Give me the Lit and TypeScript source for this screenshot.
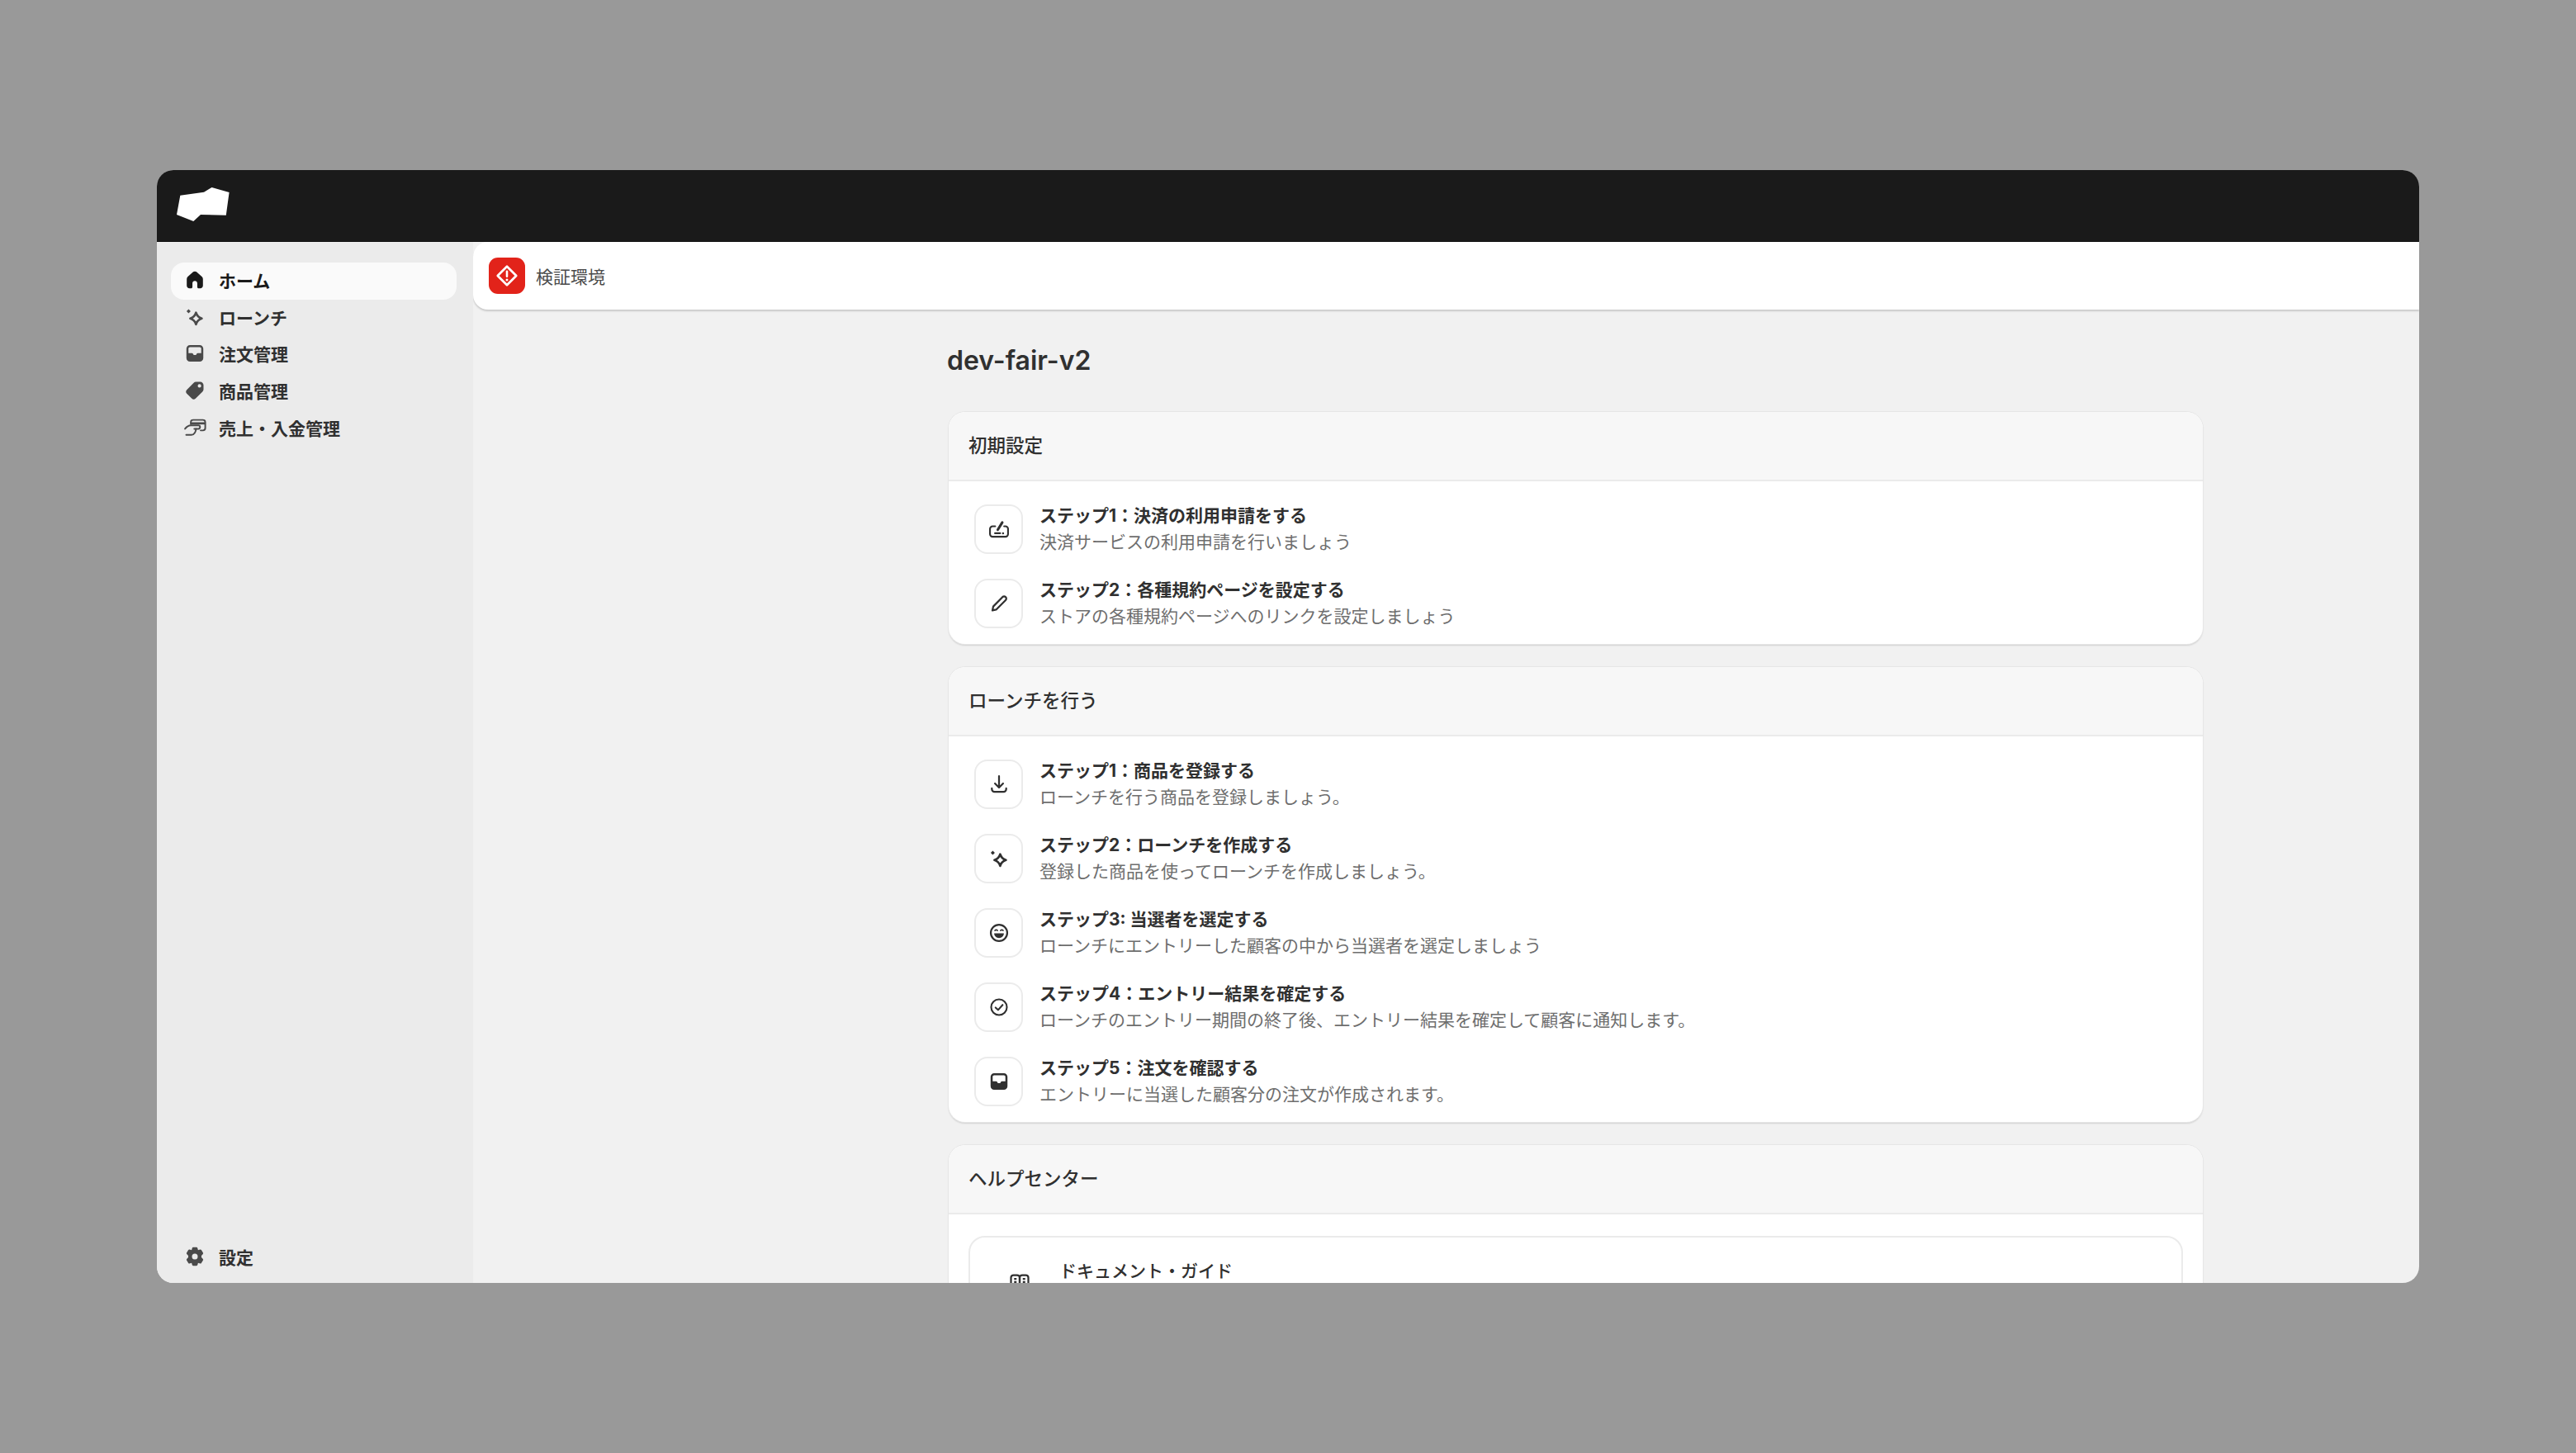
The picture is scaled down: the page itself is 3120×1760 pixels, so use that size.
import { LitElement, html, css, svg } from "lit";
import { customElement } from "lit/decorators.js";

const home = svg`<path fill="currentColor" d="M10 2.600c-.5 0-1 .2-1.400.5L3.800 7.400C3.300 7.900 3 8.500 3 9.200V15c0 1.300 1 2.400 2.300 2.400h1.200c.8 0 1.400-.6 1.400-1.400v-3.200c0-1 .9-1.900 2.100-1.900s2.100.9 2.100 1.900V16c0 .8.600 1.400 1.400 1.400h1.200c1.300 0 2.300-1.100 2.300-2.400V9.200c0-.7-.3-1.300-.8-1.800l-4.800-4.300c-.4-.3-.9-.5-1.400-.5z"/>`;
const sparkle = svg`<path fill="currentColor" d="M4.600 3.200 6.400 5 4.600 6.800 2.800 5z"/><path fill="none" stroke="currentColor" stroke-width="1.900" stroke-linejoin="round" d="M11 6.200C11.800 9 13.200 10.500 16 11.300 13.200 12.100 11.800 13.600 11 16.400 10.200 13.600 8.800 12.100 6 11.300 8.800 10.500 10.200 9 11 6.200z"/>`;
const inboxFilled = svg`<path fill="currentColor" fill-rule="evenodd" d="M5.800 2.800h8.400c1.700 0 3.100 1.400 3.100 3.100v8.200c0 1.700-1.400 3.100-3.100 3.100H5.800c-1.700 0-3.100-1.400-3.100-3.100V5.900c0-1.700 1.400-3.100 3.100-3.100zM4.500 9.800V5.900c0-.7.600-1.300 1.300-1.300h8.400c.7 0 1.300.6 1.300 1.300v3.900h-2.900c-.5 0-.9.300-1.100.7l-.5.9H9l-.5-.9c-.2-.4-.6-.7-1.100-.7z"/>`;
const tag = svg`<path fill="currentColor" fill-rule="evenodd" d="M11 2.500h3.700c1.500 0 2.800 1.300 2.800 2.800V9c0 .8-.3 1.500-.9 2l-6 6c-.9.900-2.300.9-3.200 0l-4.400-4.400c-.9-.9-.9-2.300 0-3.200l6-6c.5-.6 1.200-.9 2-.9zM14 7.500a1.500 1.500 0 1 0 0-3 1.500 1.500 0 0 0 0 3z"/>`;
const finance = svg`<g fill="none" stroke="currentColor" stroke-width="1.400" stroke-linecap="round" stroke-linejoin="round"><path d="M6.500 7V5.300c0-1.100.9-2 2-2H17c1.100 0 2 .9 2 2v5.100c0 1.100-.9 2-2 2h-2"/><path stroke-width="1.900" stroke-linecap="butt" d="M6.500 6.300H19"/><path d="M1.500 11C3 9 4.500 8 6.500 8H13c.9 0 1.500.7 1.500 1.500S13.900 11 13 11H9.500"/><path d="M11 11c0 2-1.500 5.300-4 5.300H2.500"/></g>`;
const gear = svg`<path fill="currentColor" fill-rule="evenodd" d="M8.500 2h3c.4 0 .7.300.8.600l.5 1.800 1.800-.5c.4-.1.800.1 1 .4l1.500 2.500c.2.300.1.700-.1 1L15.700 9.200v1.600l1.300 1.400c.2.300.3.700.1 1l-1.500 2.500c-.2.300-.6.500-1 .4l-1.800-.5-.5 1.800c-.1.300-.4.600-.8.600h-3c-.4 0-.7-.3-.8-.6l-.5-1.800-1.800.5c-.4.100-.8-.1-1-.4L2.900 13.200c-.2-.3-.1-.7.100-1l1.300-1.400V9.200L3 7.800c-.2-.3-.3-.7-.1-1l1.500-2.500c.2-.3.600-.5 1-.4l1.800.5.500-1.800c.1-.3.400-.6.800-.6zM10 12.500a2.500 2.500 0 1 0 0-5 2.500 2.500 0 0 0 0 5z"/>`;
const payment = svg`<g fill="none" stroke="currentColor" stroke-linecap="round" stroke-linejoin="round"><path stroke-width="1.500" d="M6.700 7.500H4.400c-1.200 0-2.200 1-2.200 2.200v4.600c0 1.200 1 2.200 2.200 2.200h11.200c1.200 0 2.200-1 2.200-2.200V9.700c0-1.200-1-2.200-2.200-2.200h-1.200"/><path stroke-width="2.200" d="M8.900 10.500 12.800 4.200"/><path stroke-width="1.500" d="M6.500 13.500h4.500"/></g><circle cx="13.500" cy="13.500" r=".9" fill="currentColor"/>`;
const pencil = svg`<path fill="none" stroke="currentColor" stroke-width="1.600" stroke-linejoin="round" d="M13 4.400c.8-.8 2-.8 2.700 0 .8.700.8 1.900 0 2.700L7.500 15.300 4.300 16 5 12.600z"/>`;
const download = svg`<path fill="none" stroke="currentColor" stroke-width="1.600" stroke-linecap="round" stroke-linejoin="round" d="M10 3v9.500M6.500 9.300 10 12.800l3.500-3.500M3.800 13.500v.7c0 1.200 1 2.300 2.300 2.300h7.800c1.300 0 2.300-1.100 2.300-2.300v-.7"/>`;
const smile = svg`<circle cx="10" cy="10" r="7.100" fill="none" stroke="currentColor" stroke-width="1.600"/><path fill="currentColor" d="M5.800 10.400h8.400c0 2.500-1.900 4-4.200 4s-4.200-1.500-4.200-4z"/><path fill="none" stroke="currentColor" stroke-width="1.200" stroke-linecap="round" d="M6.500 8c.4-.9 1.700-.9 2.100 0M11.400 8c.4-.9 1.700-.9 2.100 0"/>`;
const check = svg`<circle cx="10" cy="10" r="6.800" fill="none" stroke="currentColor" stroke-width="1.500"/><path fill="none" stroke="currentColor" stroke-width="1.500" stroke-linecap="round" stroke-linejoin="round" d="M7 10.300 9.200 12.400 13.100 8"/>`;
const book = svg`<g fill="none" stroke="currentColor" stroke-width="1.500"><path d="M3 5C3 3.900 3.900 3 5 3h3c1.100 0 2 .9 2 2v11H5c-1.100 0-2-.9-2-2z"/><path d="M17 5c0-1.100-.9-2-2-2h-3c-1.100 0-2 .9-2 2v11h5c1.100 0 2-.9 2-2z"/><path d="M5.500 6h2M5.500 8.500h2M12.500 6h2M12.500 8.500h2"/></g>`;

const icon = (p: unknown) => html`<svg viewBox="0 0 20 20" aria-hidden="true">${p}</svg>`;

const nav = [
  { t: "ホーム", i: home, active: true },
  { t: "ローンチ", i: sparkle },
  { t: "注文管理", i: inboxFilled },
  { t: "商品管理", i: tag },
  { t: "売上・入金管理", i: finance },
];

const sections = [
  {
    title: "初期設定",
    steps: [
      { i: payment, t: "ステップ1：決済の利用申請をする", s: "決済サービスの利用申請を行いましょう" },
      { i: pencil, t: "ステップ2：各種規約ページを設定する", s: "ストアの各種規約ページへのリンクを設定しましょう" },
    ],
  },
  {
    title: "ローンチを行う",
    steps: [
      { i: download, t: "ステップ1：商品を登録する", s: "ローンチを行う商品を登録しましょう。" },
      { i: sparkle, t: "ステップ2：ローンチを作成する", s: "登録した商品を使ってローンチを作成しましょう。" },
      { i: smile, t: "ステップ3: 当選者を選定する", s: "ローンチにエントリーした顧客の中から当選者を選定しましょう" },
      { i: check, t: "ステップ4：エントリー結果を確定する", s: "ローンチのエントリー期間の終了後、エントリー結果を確定して顧客に通知します。" },
      { i: inboxFilled, t: "ステップ5：注文を確認する", s: "エントリーに当選した顧客分の注文が作成されます。" },
    ],
  },
];

@customElement("app-root")
export class AppRoot extends LitElement {
  static styles = css`
    :host {
      display: block;
      height: 1760px;
      background: #999999;
      box-sizing: border-box;
      padding: 206px 190px;
      font-family: Inter, "Noto Sans CJK JP", "Noto Sans", sans-serif;
      color: #303030;
    }
    * { box-sizing: border-box; }
    .window {
      height: 1348px;
      border-radius: 20px;
      overflow: hidden;
      display: flex;
      flex-direction: column;
      background: #f1f1f1;
    }
    .top {
      flex: none;
      height: 87px;
      background: #1a1a1a;
      display: flex;
      align-items: center;
      padding: 0 0 3px 24px;
      border-bottom: 1px solid #0c0c0c;
    }
    .logo { width: 64px; height: 41px; display: block; }
    .body { flex: 1; min-height: 0; display: flex; }
    .side {
      flex: none;
      width: 383px;
      background: #ebebeb;
      padding: 25px 20px 0 17px;
      display: flex;
      flex-direction: column;
    }
    .nav { display: flex; flex-direction: column; flex: 1; }
    .item {
      height: 44.800px;
      display: flex;
      align-items: center;
      padding: 0 0 3px 15px;
      gap: 15px;
      border-radius: 16px;
      font-size: 21px;
      font-weight: 700;
      color: #303030;
    }
    .item.active { background: #fafafa; color: #1a1a1a; }
    .item svg { width: 28px; height: 28px; flex: none; color: #4a4a4a; }
    .item.active svg { color: #1a1a1a; }
    .settings { margin-bottom: 8px; }
    .main { flex: 1; min-width: 0; display: flex; flex-direction: column; overflow: hidden; }
    .banner {
      flex: none;
      height: 82px;
      background: #ffffff;
      border-radius: 18px 0 0 18px;
      box-shadow: 0 2px 2px rgba(0,0,0,.16);
      display: flex;
      align-items: center;
      padding-left: 19px;
      gap: 13px;
      font-size: 21px;
      color: #4a4a4a;
    }
    .badge {
      width: 44px;
      height: 44px;
      background: #e2231a;
      border-radius: 11px;
      display: flex;
      align-items: center;
      justify-content: center;
    }
    .badge svg { width: 30px; height: 30px; display: block; }
    .content {
      flex: 1;
      min-height: 0;
      padding: 40px 262px 0 574px;
      display: flex;
      flex-direction: column;
    }
    h1 {
      margin: 0 0 40px;
      font-size: 32px;
      line-height: 44px;
      font-weight: 600;
      color: #303030;
    }
    .card {
      flex: none;
      margin: 0 0 28px 2px;
      background: #ffffff;
      border-radius: 20px;
      overflow: hidden;
      box-shadow: 0 0 0 1px #e6e6e6, 0 2px 2px rgba(0,0,0,.14);
    }
    .head {
      height: 84px;
      background: #f7f7f7;
      border-bottom: 2px solid #ebebeb;
      padding: 0 0 4px 24px;
      display: flex;
      align-items: center;
      font-size: 22.500px;
      font-weight: 500;
      color: #303030;
    }
    .steps { padding: 28px 31px 19px; display: flex; flex-direction: column; gap: 30px; }
    .step { height: 60px; display: flex; align-items: center; gap: 20px; }
    .ibox {
      flex: none;
      width: 59px;
      height: 60px;
      border: 2px solid #ebebeb;
      border-radius: 16px;
      display: flex;
      align-items: center;
      justify-content: center;
      color: #303030;
    }
    .ibox svg { width: 28px; height: 28px; }
    .txt { display: flex; flex-direction: column; }
    .t { font-size: 21px; line-height: 32px; font-weight: 700; color: #303030; }
    .s { font-size: 21px; line-height: 32px; color: #6e6e6e; }
    .help { padding: 26px 24px 0; }
    .doc {
      height: 120px;
      border: 2px solid #ebebeb;
      border-radius: 20px;
      display: flex;
      padding: 28px 0 0 45px;
      gap: 33px;
    }
    .doc svg { width: 30px; height: 30px; margin-top: 13px; flex: none; color: #303030; }
    .doc .t { line-height: 26px; font-weight: 500; }
  `;

  render() {
    return html`
      <div class="window">
        <div class="top">
          <svg class="logo" viewBox="0 0 64 41" aria-hidden="true">
            <path fill="#fff" d="M4.300 9.700 33 5.700 42.500 0 63.600 6 59.800 33.700 29 33 20.300 41 0 33Z"/>
          </svg>
        </div>
        <div class="body">
          <aside class="side">
            <div class="nav">
              ${nav.map((n) => html`<div class="item ${n.active ? "active" : ""}">${icon(n.i)}<span>${n.t}</span></div>`)}
            </div>
            <div class="item settings">${icon(gear)}<span>設定</span></div>
          </aside>
          <main class="main">
            <div class="banner">
              <div class="badge">
                <svg viewBox="0 0 20 20" aria-hidden="true">
                  <path fill="none" stroke="#fff" stroke-width="1.800" stroke-linejoin="round" d="M10 2.500 17.500 10 10 17.500 2.500 10z"/>
                  <path stroke="#fff" stroke-width="1.700" stroke-linecap="round" d="M10 6.500v4"/>
                  <circle cx="10" cy="13.300" r="1" fill="#fff"/>
                </svg>
              </div>
              <span>検証環境</span>
            </div>
            <div class="content">
              <h1>dev-fair-v2</h1>
              ${sections.map(
                (sec) => html`
                  <section class="card">
                    <div class="head">${sec.title}</div>
                    <div class="steps">
                      ${sec.steps.map(
                        (st) => html`
                          <div class="step">
                            <div class="ibox">${icon(st.i)}</div>
                            <div class="txt"><div class="t">${st.t}</div><div class="s">${st.s}</div></div>
                          </div>
                        `
                      )}
                    </div>
                  </section>
                `
              )}
              <section class="card">
                <div class="head">ヘルプセンター</div>
                <div class="help">
                  <div class="doc">${icon(book)}<div class="t">ドキュメント・ガイド</div></div>
                </div>
              </section>
            </div>
          </main>
        </div>
      </div>
    `;
  }
}
